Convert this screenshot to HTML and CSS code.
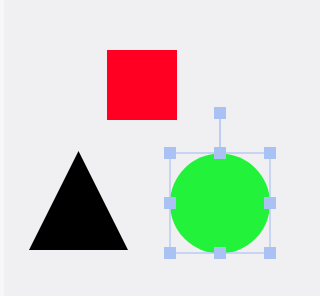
FILE: index.html
```html
<!DOCTYPE html>
<html>
<head>
<meta charset="utf-8">
<link rel="stylesheet" href="styles.css">
</head>
<body>
<div class="stage">
  <svg class="canvas" width="296" height="296" viewBox="4 0 296 296" xmlns="http://www.w3.org/2000/svg">
    <rect x="107" y="50" width="70" height="70" fill="#ff0022"/>
    <polygon points="78.5,151 29,250 128,250" fill="#000000"/>
    <circle cx="220" cy="203.5" r="50" fill="#22f23a"/>
    <g class="sel">
      <line x1="220" y1="113" x2="220" y2="153" stroke="#aec3f2" stroke-width="1.5"/>
      <rect x="170" y="153" width="100" height="100" fill="none" stroke="#aec3f2" stroke-width="1.2"/>
      <g fill="#a9c1f3">
        <rect x="214" y="107" width="12" height="12"/>
        <rect x="164" y="147" width="12" height="12"/>
        <rect x="214" y="147" width="12" height="12"/>
        <rect x="264" y="147" width="12" height="12"/>
        <rect x="164" y="197" width="12" height="12"/>
        <rect x="264" y="197" width="12" height="12"/>
        <rect x="164" y="247" width="12" height="12"/>
        <rect x="214" y="247" width="12" height="12"/>
        <rect x="264" y="247" width="12" height="12"/>
      </g>
    </g>
  </svg>
</div>
</body>
</html>
```
FILE: styles.css
```css
html, body {
  margin: 0;
  padding: 0;
  width: 300px;
  height: 296px;
  overflow: hidden;
  background: #f0f0f2;
}
.stage {
  display: flex;
  width: 300px;
  height: 296px;
  box-sizing: border-box;
  border-left: 4px solid #f7f7f7;
  background: #f0f0f2;
}
.canvas {
  display: block;
}
```
